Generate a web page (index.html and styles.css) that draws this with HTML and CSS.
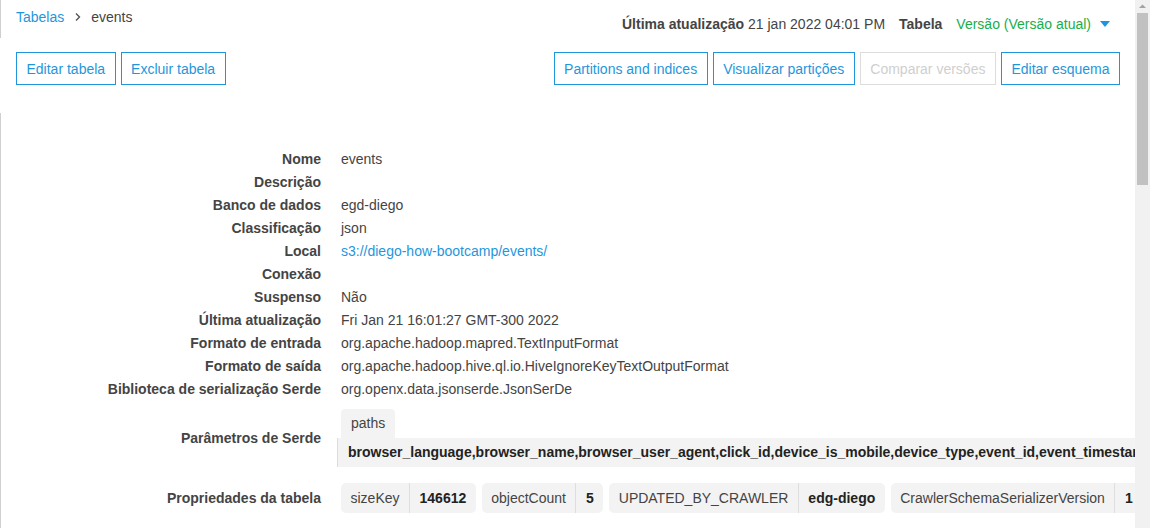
FILE: index.html
```html
<!DOCTYPE html>
<html lang="pt-BR">
<head>
<meta charset="utf-8">
<title>events</title>
<link rel="stylesheet" href="styles.css">
</head>
<body>
<div class="app">
  <main class="main">
    <header class="top">
      <nav class="crumbs">
        <a class="link" href="#">Tabelas</a>
        <svg class="chev" width="8" height="10" viewBox="0 0 8 10"><path d="M2 1.5 L5.5 5 L2 8.5" fill="none" stroke="#555" stroke-width="1.4"/></svg>
        <span class="current">events</span>
      </nav>
      <div class="meta">
        <span><b>Última atualização</b> 21 jan 2022 04:01 PM</span>
        <b class="meta-tab">Tabela</b>
        <span class="version">Versão (Versão atual)</span>
        <svg class="caret" width="10" height="6" viewBox="0 0 10 6"><path d="M0 0 H10 L5 6 Z" fill="#1f96dc"/></svg>
      </div>
    </header>
    <div class="actions">
      <div class="group">
        <button class="btn">Editar tabela</button>
        <button class="btn">Excluir tabela</button>
      </div>
      <div class="group">
        <button class="btn">Partitions and indices</button>
        <button class="btn">Visualizar partições</button>
        <button class="btn disabled">Comparar versões</button>
        <button class="btn">Editar esquema</button>
      </div>
    </div>
    <section class="details">
      <div class="row"><div class="label">Nome</div><div class="value">events</div></div>
      <div class="row"><div class="label">Descrição</div><div class="value"></div></div>
      <div class="row"><div class="label">Banco de dados</div><div class="value">egd-diego</div></div>
      <div class="row"><div class="label">Classificação</div><div class="value">json</div></div>
      <div class="row"><div class="label">Local</div><div class="value"><a class="link" href="#">s3://diego-how-bootcamp/events/</a></div></div>
      <div class="row"><div class="label">Conexão</div><div class="value"></div></div>
      <div class="row"><div class="label">Suspenso</div><div class="value">Não</div></div>
      <div class="row"><div class="label">Última atualização</div><div class="value">Fri Jan 21 16:01:27 GMT-300 2022</div></div>
      <div class="row"><div class="label">Formato de entrada</div><div class="value">org.apache.hadoop.mapred.TextInputFormat</div></div>
      <div class="row"><div class="label">Formato de saída</div><div class="value">org.apache.hadoop.hive.ql.io.HiveIgnoreKeyTextOutputFormat</div></div>
      <div class="row"><div class="label">Biblioteca de serialização Serde</div><div class="value">org.openx.data.jsonserde.JsonSerDe</div></div>
      <div class="row serde">
        <div class="label">Parâmetros de Serde</div>
        <div class="value">
          <div class="param-key">paths</div>
          <div class="param-val">browser_language,browser_name,browser_user_agent,click_id,device_is_mobile,device_type,event_id,event_timestamp</div>
        </div>
      </div>
      <div class="row props">
        <div class="label">Propriedades da tabela</div>
        <div class="value chips">
          <div class="chip"><span class="k">sizeKey</span><span class="v">146612</span></div>
          <div class="chip"><span class="k">objectCount</span><span class="v">5</span></div>
          <div class="chip"><span class="k">UPDATED_BY_CRAWLER</span><span class="v">edg-diego</span></div>
          <div class="chip"><span class="k">CrawlerSchemaSerializerVersion</span><span class="v">1</span></div>
        </div>
      </div>
    </section>
  </main>
  <div class="scrollbar">
    <svg class="sb-arrow" width="15" height="13" viewBox="0 0 15 13"><path d="M4 8 L7.5 4.5 L11 8 Z" fill="#a3a3a3"/></svg>
    <div class="sb-thumb"></div>
  </div>
</div>
</body>
</html>
```
FILE: styles.css
```css
html, body {
  margin: 0;
  padding: 0;
  background: #fff;
}
body {
  font-family: "Liberation Sans", Arial, sans-serif;
  font-size: 14px;
  color: #444;
}
b, .label, .param-val, .chip .v {
  font-weight: 700;
}
.app {
  display: flex;
  height: 528px;
  overflow: hidden;
}
.main {
  flex: 1;
  min-width: 0;
  overflow: hidden;
}
.link {
  color: #1f96dc;
  text-decoration: none;
}
.top {
  display: flex;
  justify-content: space-between;
  align-items: flex-start;
  height: 38px;
  padding: 0 25px 0 15px;
  border-left: 1px solid #cfcfcf;
  box-sizing: border-box;
}
.crumbs {
  display: flex;
  align-items: center;
  padding-top: 7px;
  line-height: 20px;
}
.chev {
  margin: 0 9px 0 10px;
}
.current { color: #444; }
.meta {
  display: flex;
  align-items: center;
  padding-top: 14px;
  line-height: 20px;
  color: #444;
}
.meta b { color: #444; }
.meta-tab { margin-left: 14px; }
.version {
  margin-left: 14px;
  color: #17ae4b;
}
.caret { margin-left: 9px; }
.actions {
  display: flex;
  justify-content: space-between;
  padding: 14px 15px 0 16px;
}
.group {
  display: flex;
  gap: 5px;
}
.btn {
  font-family: inherit;
  font-size: 14px;
  height: 33px;
  padding: 0 9.5px;
  background: #fff;
  color: #1f96dc;
  border: 1px solid #1f96dc;
  border-radius: 0;
}
.btn.disabled {
  color: #cfcfcf;
  border-color: #dcdcdc;
}
.details {
  box-sizing: border-box;
  border-left: 1px solid #cfcfcf;
  margin-top: 28px;
  padding-top: 35px;
  height: 500px;
}
.row {
  display: grid;
  grid-template-columns: 320px 1fr;
  column-gap: 20px;
  line-height: 23px;
  align-items: center;
}
.label {
  text-align: right;
  color: #444;
  white-space: nowrap;
}
.value {
  color: #444;
  white-space: nowrap;
  min-height: 23px;
  min-width: 0;
}
.serde { margin-top: 8px; }
.param-key {
  display: inline-block;
  background: #f3f3f3;
  padding: 3px 10px;
  border-radius: 4px 4px 0 0;
}
.param-val {
  margin-left: -4px;
  background: #f3f3f3;
  border-left: 1px solid #dcdcdc;
  padding: 3px 10px;
  color: #222;
  overflow: hidden;
}
.props { margin-top: 16px; }
.chips {
  display: flex;
  gap: 6px;
}
.chip {
  display: flex;
  flex: none;
  background: #f3f3f3;
  border-radius: 5px;
  line-height: 30px;
}
.chip .k {
  padding: 0 9.5px;
  border-right: 1px solid #dedede;
}
.chip .v {
  padding: 0 9.5px;
  color: #222;
}
.scrollbar {
  width: 15px;
  flex: none;
  background: #f1f1f1;
  display: flex;
  flex-direction: column;
  align-items: center;
}
.sb-arrow { display: block; }
.sb-thumb {
  width: 11px;
  height: 172px;
  background: #c1c1c1;
}
```
